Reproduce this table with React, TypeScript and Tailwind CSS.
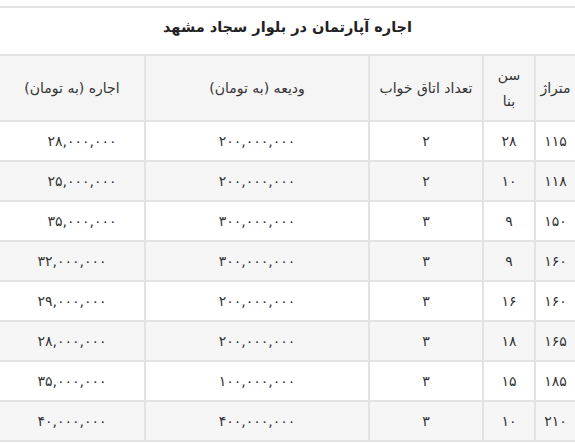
type Row = {
  area: string;
  age: string;
  rooms: string;
  deposit: string;
  rent: string;
  shifted?: boolean;
};

const ROWS: Row[] = [
  { area: "۱۱۵", age: "۲۸", rooms: "۲", deposit: "۲۰۰,۰۰۰,۰۰۰", rent: "۲۸,۰۰۰,۰۰۰", shifted: true },
  { area: "۱۱۸", age: "۱۰", rooms: "۲", deposit: "۲۰۰,۰۰۰,۰۰۰", rent: "۲۵,۰۰۰,۰۰۰", shifted: true },
  { area: "۱۵۰", age: "۹", rooms: "۳", deposit: "۳۰۰,۰۰۰,۰۰۰", rent: "۳۵,۰۰۰,۰۰۰", shifted: true },
  { area: "۱۶۰", age: "۹", rooms: "۳", deposit: "۳۰۰,۰۰۰,۰۰۰", rent: "۳۲,۰۰۰,۰۰۰" },
  { area: "۱۶۰", age: "۱۶", rooms: "۳", deposit: "۲۰۰,۰۰۰,۰۰۰", rent: "۲۹,۰۰۰,۰۰۰" },
  { area: "۱۶۵", age: "۱۸", rooms: "۳", deposit: "۲۰۰,۰۰۰,۰۰۰", rent: "۲۸,۰۰۰,۰۰۰" },
  { area: "۱۸۵", age: "۱۵", rooms: "۳", deposit: "۱۰۰,۰۰۰,۰۰۰", rent: "۳۵,۰۰۰,۰۰۰" },
  { area: "۲۱۰", age: "۱۰", rooms: "۳", deposit: "۴۰۰,۰۰۰,۰۰۰", rent: "۴۰,۰۰۰,۰۰۰" },
];

const COLS = "grid grid-cols-[41px_52px_114px_224px_1fr]";
const CELL = "flex items-center justify-center border-l-2 border-[#e3e3e3]";
const LAST = "flex items-center justify-center";

export default function App() {
  return (
    <div
      dir="rtl"
      className="w-[575px] h-[443px] overflow-hidden bg-white pt-[6px] text-[#333] font-['DejaVu_Sans',sans-serif]"
    >
      <div className="border-t-2 border-b-2 border-[#e3e3e3] h-[50px] pb-[8px] flex items-center justify-center">
        <h1 className="text-[14.5px] font-bold text-[#222] leading-none">
          اجاره آپارتمان در بلوار سجاد مشهد
        </h1>
      </div>

      <div className={`${COLS} h-[66px] bg-[#f5f5f5] border-b-2 border-[#e3e3e3] text-[14px]`}>
        <div className={CELL}>متراژ</div>
        <div className={`${CELL} flex-col leading-[26px]`}>
          <span>سن</span>
          <span>بنا</span>
        </div>
        <div className={CELL}>تعداد اتاق خواب</div>
        <div className={CELL}>ودیعه (به تومان)</div>
        <div className={LAST}>اجاره (به تومان)</div>
      </div>

      {ROWS.map((r, i) => (
        <div
          key={i}
          className={`${COLS} h-[40px] border-b-2 border-[#e3e3e3] text-[14px] ${
            i % 2 === 1 ? "bg-[#f6f6f6]" : "bg-white"
          }`}
        >
          <div className={CELL}>{r.area}</div>
          <div className={CELL}>{r.age}</div>
          <div className={CELL}>{r.rooms}</div>
          <div className={CELL}>{r.deposit}</div>
          <div className={`${LAST} ${r.shifted ? "pl-[20px]" : ""}`}>{r.rent}</div>
        </div>
      ))}
    </div>
  );
}
